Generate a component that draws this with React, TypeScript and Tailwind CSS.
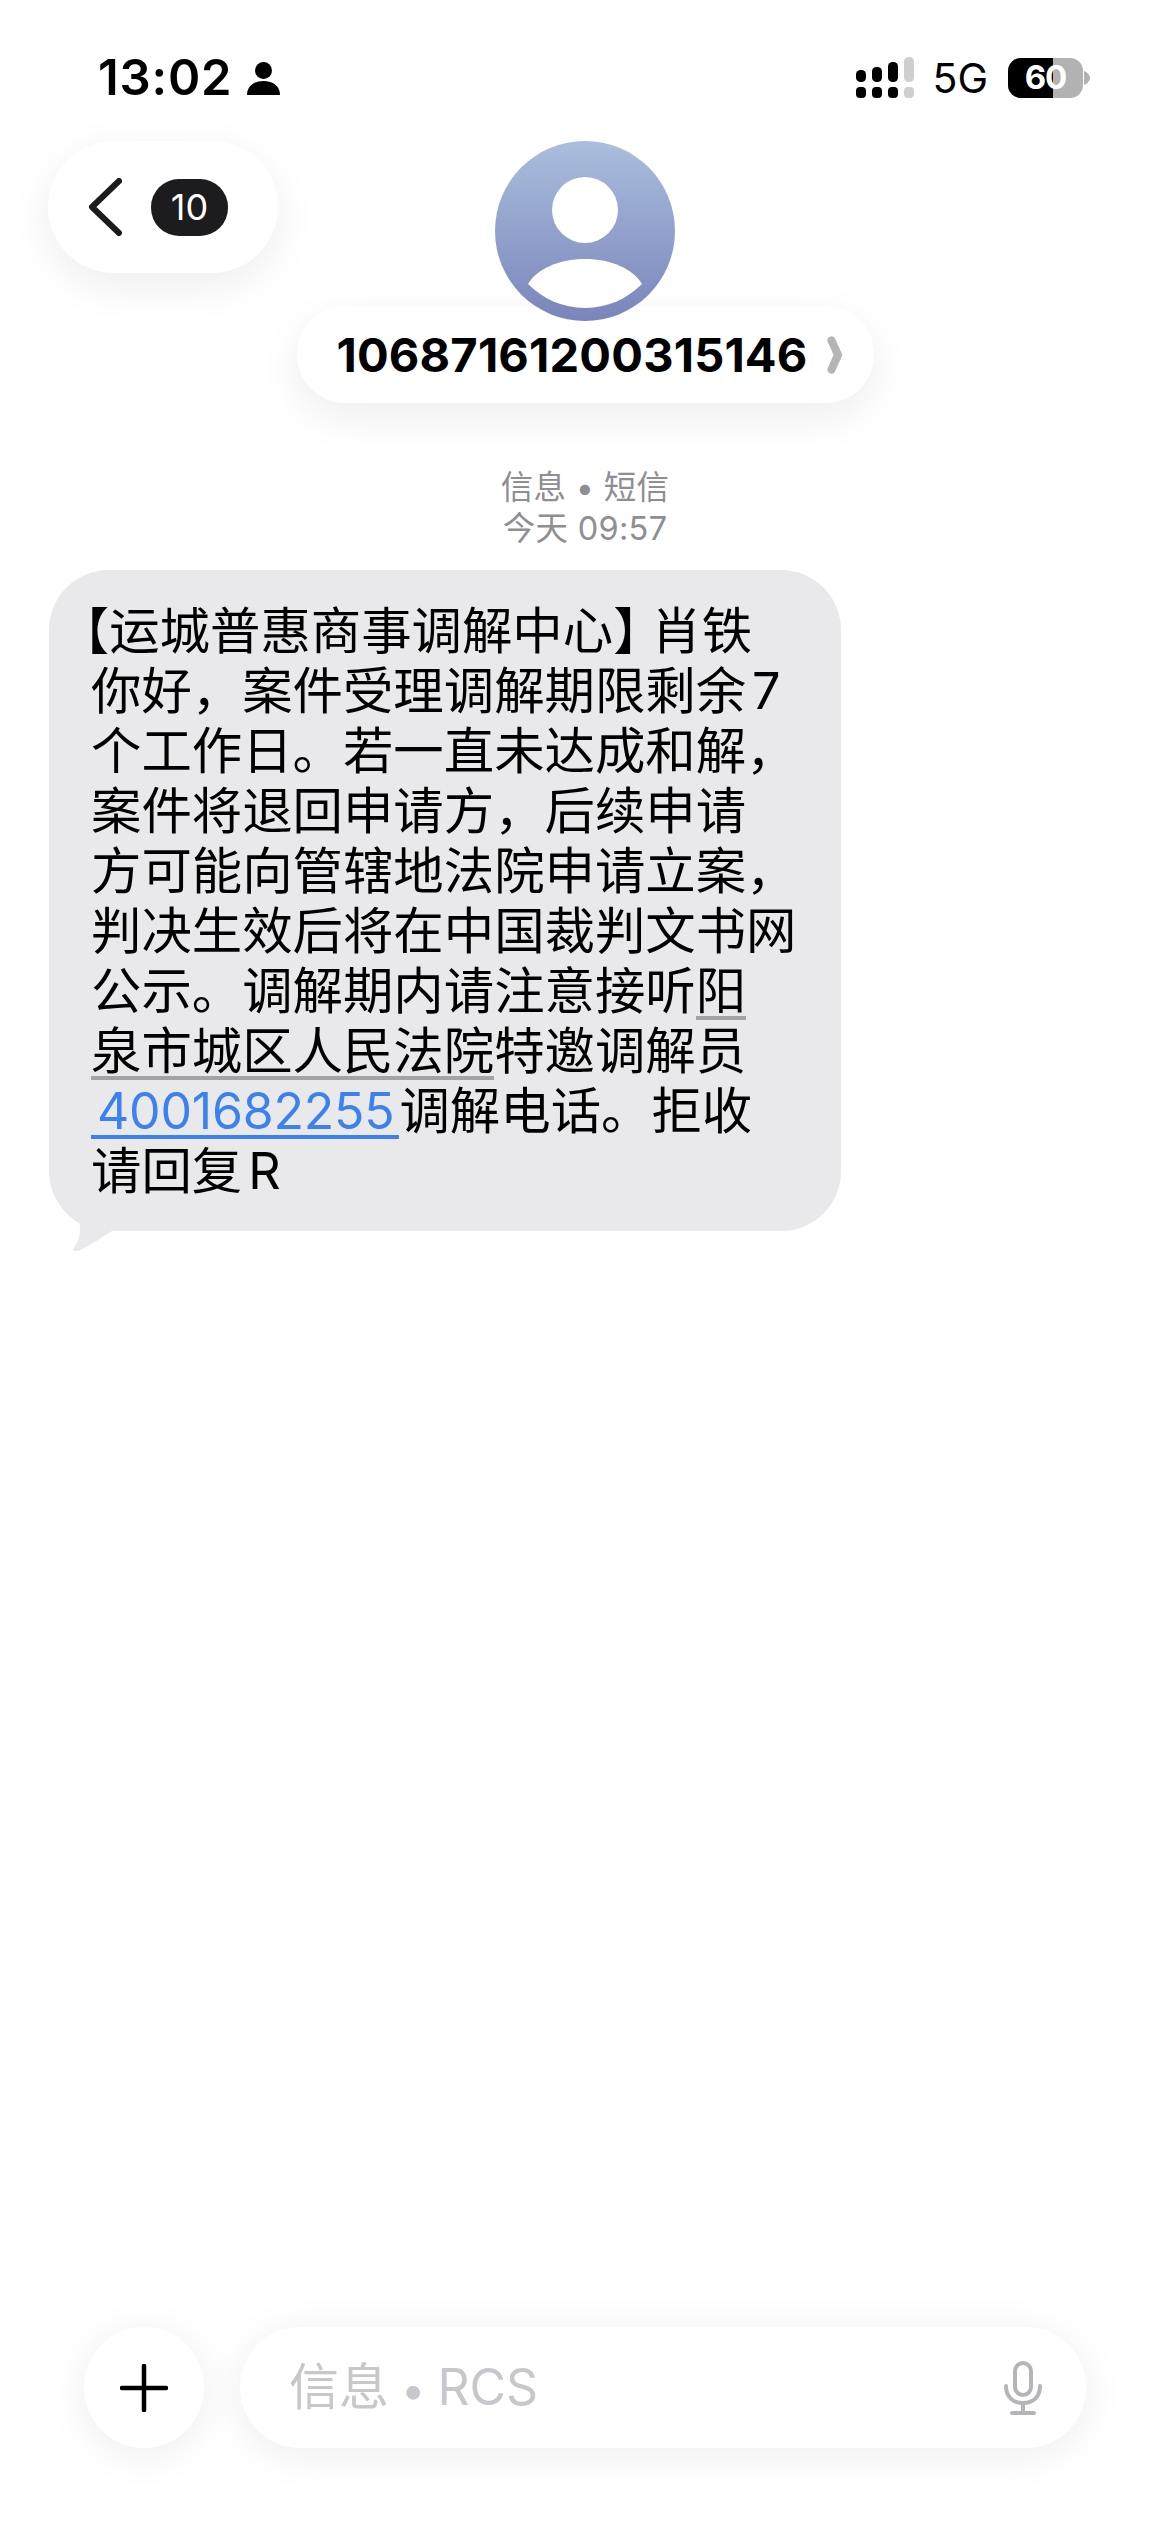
function SignalIcon() {
  return (
    <svg width="58" height="41" viewBox="0 0 58 41">
      <rect x="0" y="13" width="10" height="12" rx="4.5" fill="#000" />
      <rect x="16" y="10" width="10" height="15" rx="4.5" fill="#000" />
      <rect x="32" y="5" width="10" height="20" rx="4.5" fill="#000" />
      <rect x="48" y="0" width="10" height="25" rx="4.5" fill="#cfcfcf" />
      <rect x="0" y="30" width="10" height="11" rx="4" fill="#000" />
      <rect x="16" y="30" width="10" height="11" rx="4" fill="#000" />
      <rect x="32" y="30" width="10" height="11" rx="4" fill="#000" />
      <rect x="48" y="30" width="10" height="11" rx="4" fill="#cfcfcf" />
    </svg>
  )
}

function Battery() {
  return (
    <div className="flex items-center">
      <div className="relative flex h-[40px] w-[75px] items-center justify-center overflow-hidden rounded-[13px] bg-[#b2b2b2]">
        <div className="absolute inset-y-0 left-0 w-[45px] bg-black" />
        <span className="relative text-[33px] font-bold leading-none tracking-[-1px] text-white">60</span>
      </div>
      <svg width="6" height="14" viewBox="0 0 6 14" className="ml-[1px]">
        <path d="M0 0 C3 1 6 4 6 7 C6 10 3 13 0 14 Z" fill="#b2b2b2" />
      </svg>
    </div>
  )
}

function Avatar() {
  return (
    <svg width="180" height="180" viewBox="0 0 180 180" className="block">
      <defs>
        <linearGradient id="avatarBg" x1="0" y1="0" x2="0" y2="1">
          <stop offset="0" stopColor="#aabedd" />
          <stop offset="1" stopColor="#7a85bb" />
        </linearGradient>
      </defs>
      <circle cx="90" cy="90" r="90" fill="url(#avatarBg)" />
      <circle cx="90" cy="69" r="33" fill="#fff" />
      <path d="M33 143 C42 128 64 118 90 118 C116 118 138 128 147 143 C132 158 112 167 90 167 C68 167 48 158 33 143 Z" fill="#fff" />
    </svg>
  )
}

const lineClass = "h-[60px] whitespace-nowrap"
const grayLink = "inline-block h-[59px] border-b-[4px] border-[#a3a3a6]"
const halfWidth = "[font-feature-settings:'halt']"

export default function App() {
  return (
    <div lang="zh-CN" className="flex h-[2532px] w-[1170px] flex-col overflow-hidden bg-white font-['Inter','Noto_Sans_CJK_SC',sans-serif] text-black">
      {/* status bar */}
      <div className="flex h-[141px] items-start justify-between pl-[98px] pr-[80px] pt-[52px]">
        <div className="flex items-center gap-[15px]">
          <span className="text-[49px] font-semibold leading-[52px] tracking-[0.8px]">13:02</span>
          <svg width="33" height="33" viewBox="0 0 33 33">
            <circle cx="16.5" cy="8.5" r="8.5" fill="#000" />
            <path d="M0 33 C0 24 7 19 16.5 19 C26 19 33 24 33 33 Z" fill="#000" />
          </svg>
        </div>
        <div className="flex items-center pt-[5px]">
          <SignalIcon />
          <span className="ml-[18px] mr-[20px] text-[41px] leading-[40px]">5G</span>
          <Battery />
        </div>
      </div>

      {/* header */}
      <div className="grid grid-cols-[1fr_577px_1fr]">
        <div className="pl-[48px]">
          <div className="flex h-[132px] w-[230px] items-center gap-[29px] rounded-[66px] bg-white pl-[40px] shadow-[0_12px_44px_rgba(0,0,0,0.07)]">
            <svg width="34" height="58" viewBox="0 0 34 58" fill="none">
              <path d="M31 3 L4 29 L31 55" stroke="#1c1c1e" strokeWidth="6" strokeLinecap="round" strokeLinejoin="round" />
            </svg>
            <div className="flex h-[57px] w-[77px] items-center justify-center rounded-[28px] bg-[#1c1c1e] text-[36px] text-white">10</div>
          </div>
        </div>
        <div className="flex flex-col items-center">
          <div className="relative z-10 rounded-full">
            <Avatar />
          </div>
          <div className="-mt-[15px] flex h-[97px] w-[577px] items-center rounded-[48px] bg-white pl-[40px] shadow-[0_14px_44px_rgba(0,0,0,0.07)]">
            <span className="relative z-10 text-[47px] font-bold leading-none tracking-[0.2px]">10687161200315146</span>
            <svg width="16" height="38" viewBox="0 0 16 38" fill="none" className="ml-[19px]">
              <path d="M4.5 4.5 L11 19 L4.5 33.5" stroke="#b5b5b5" strokeWidth="8" strokeLinecap="round" strokeLinejoin="round" />
            </svg>
          </div>
        </div>
      </div>

      {/* meta */}
      <div className="mt-[64px] flex flex-col items-center text-[32.5px] leading-[41px] tracking-[0.3px] text-[#8e8e93]">
        <span>信息 • 短信</span>
        <span>今天 09:57</span>
      </div>

      {/* bubble */}
      <div className="relative ml-[49px] mt-[21px] h-[661px] w-[792px] rounded-[60px] bg-[#e9e9eb] pl-[42px] pt-[31px] text-[50.4px] leading-[60px]">
        <div className={`${lineClass} -ml-[7px]`}><span className={halfWidth}>【</span>运城普惠商事调解中心<span className={`${halfWidth} mr-[13px]`}>】</span>肖铁</div>
        <div className={lineClass}>你好，案件受理调解期限剩余<span className="ml-[6px]">7</span></div>
        <div className={lineClass}>个工作日。若一直未达成和解，</div>
        <div className={lineClass}>案件将退回申请方，后续申请</div>
        <div className={lineClass}>方可能向管辖地法院申请立案，</div>
        <div className={lineClass}>判决生效后将在中国裁判文书网</div>
        <div className={lineClass}>公示。调解期内请注意接听<span className={grayLink}>阳</span></div>
        <div className={lineClass}><span className={grayLink}>泉市城区人民法院</span>特邀调解员</div>
        <div className={lineClass}>
          <span className="inline-block h-[58px] border-b-[4px] border-[#3b82f0] pl-[6px] pr-[5px] text-[50px] tracking-[-0.2px] text-[#3b82f0]">4001682255</span>调解电话。拒收
        </div>
        <div className={lineClass}>请回复<span className="ml-[6px]">R</span></div>
        <svg width="60" height="50" viewBox="0 0 60 50" className="absolute -bottom-[20px] left-[20px]">
          <path d="M9 14 C13 31 11 39 4 48 C6 52 9 51 11 49 C21 45 31 37 43 30 L43 14 Z" fill="#e9e9eb" />
        </svg>
      </div>

      {/* composer */}
      <div className="mt-auto mb-[84px] flex gap-[36px] px-[84px]">
        <div className="flex h-[121px] w-[120px] items-center justify-center rounded-full bg-white shadow-[0_6px_44px_rgba(0,0,0,0.07)]">
          <svg width="48" height="48" viewBox="0 0 48 48" fill="none">
            <path d="M24 2 V46 M2 24 H46" stroke="#000" strokeWidth="4.5" strokeLinecap="round" />
          </svg>
        </div>
        <div className="flex h-[121px] flex-1 items-center justify-between rounded-[60px] bg-white pl-[49px] pr-[44px] shadow-[0_6px_44px_rgba(0,0,0,0.07)]">
          <span className="text-[50px] text-[#c7c7cc]">信息<span className="text-[43px]"> • </span>RCS</span>
          <svg width="38" height="54" viewBox="0 0 38 54" fill="none" stroke="#b4b4ba" strokeWidth="4" strokeLinecap="round">
            <rect x="11" y="2" width="16" height="32" rx="8" />
            <path d="M2 25 C2 36 9 42 19 42 C29 42 36 36 36 25" />
            <path d="M19 42 V51 M8 52 H30" />
          </svg>
        </div>
      </div>
    </div>
  )
}
